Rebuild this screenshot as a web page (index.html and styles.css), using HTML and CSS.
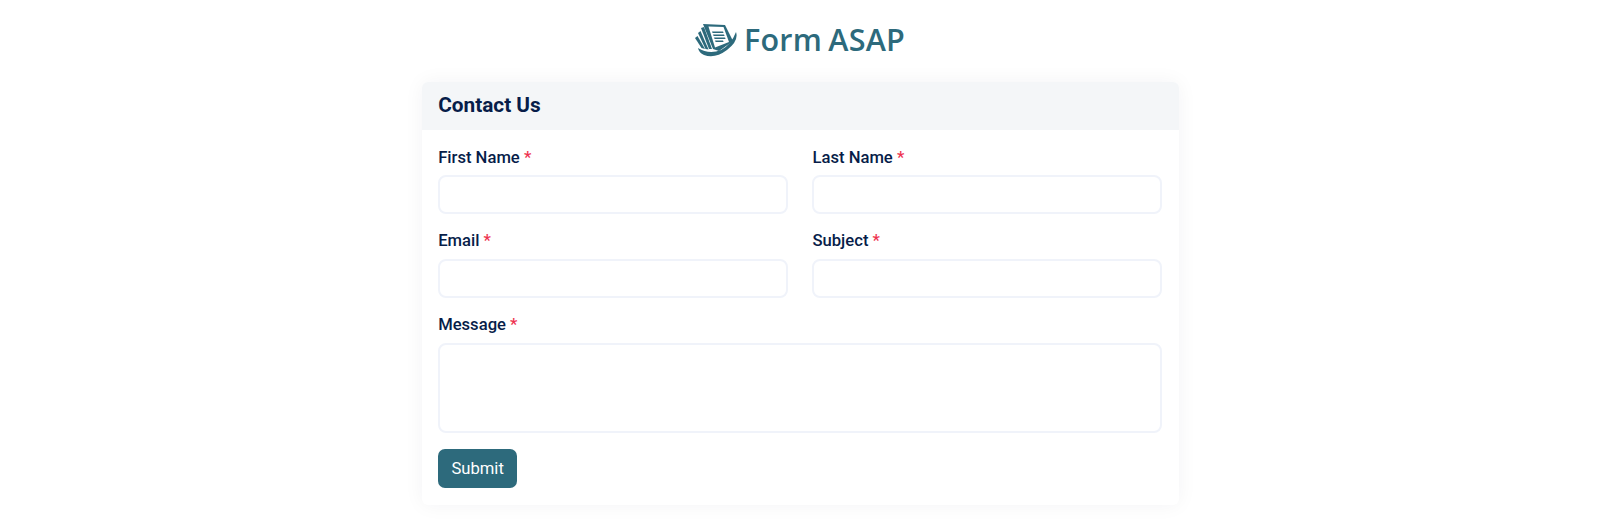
FILE: index.html
```html
<!DOCTYPE html>
<html lang="en">
<head>
<meta charset="utf-8">
<title>Contact Us</title>
<link rel="stylesheet" href="styles.css">
</head>
<body>
<header class="brand">
  <svg class="brand-icon" width="42" height="33" viewBox="0 0 42 33" aria-hidden="true">
    <path class="ink" d="M8 0 L30 1 L38 17 L24 27 L18 25 Z"/>
    <path class="paper" d="M13.500 2.500 L28.500 3 L34 18 L20 23.500 Z"/>
    <path class="ink" d="M17 7.500h11l.6 1.500h-11zM18 10.500h11l.6 1.500h-11zM19 13.500h11l.6 1.500h-11zM20 16.500h8l.6 1.500h-8z"/>
    <path class="ink" d="M6 4 L9 3 L17 25 L14 25 Z"/>
    <path class="ink" d="M3 9 L5.500 7 L13.500 25.500 L10.500 25 Z"/>
    <path class="ink" d="M0 14 L2.500 12 L10 25 L6.500 24 Z"/>
    <path class="ink" d="M3 24 Q14 31 26 26 Q36 21 41 8 Q44 17 32 26 Q20 35 9 31 Q4 29 3 24 Z"/>
  </svg>
  <span class="brand-name">Form ASAP</span>
</header>
<main class="card">
  <h1 class="card-title">Contact Us</h1>
  <form class="card-body">
    <div class="grid">
      <div class="field">
        <label class="label" for="first">First Name <span class="req">*</span></label>
        <input class="control" id="first" type="text">
      </div>
      <div class="field">
        <label class="label" for="last">Last Name <span class="req">*</span></label>
        <input class="control" id="last" type="text">
      </div>
      <div class="field">
        <label class="label" for="email">Email <span class="req">*</span></label>
        <input class="control" id="email" type="email">
      </div>
      <div class="field">
        <label class="label" for="subject">Subject <span class="req">*</span></label>
        <input class="control" id="subject" type="text">
      </div>
      <div class="field wide">
        <label class="label" for="message">Message <span class="req">*</span></label>
        <textarea class="control area" id="message"></textarea>
      </div>
    </div>
    <button class="submit" type="button">Submit</button>
  </form>
</main>
</body>
</html>
```
FILE: styles.css
```css
* { box-sizing: border-box; }
html, body { margin: 0; height: 100%; background: #fff; overflow: hidden; }
body { font-family: Roboto, "Liberation Sans", sans-serif; color: #071d49; }
.brand {
  display: flex; align-items: center; justify-content: center; gap: 7px;
  height: 82px; padding-bottom: 4px;
}
.brand-icon { display: block; margin-top: 3px; }
.ink { fill: #2d6a7c; }
.paper { fill: #fff; }
.brand-name {
  font-family: "Open Sans", sans-serif; font-weight: 600; font-size: 30.5px;
  letter-spacing: 0.25px; word-spacing: -2px; color: #2d6a7c; line-height: 34px;
}
.card {
  width: 757px; height: 423px; margin: 0 auto; background: #fff; border-radius: 6px;
  box-shadow: 0 0 20px rgba(20, 30, 60, 0.05); overflow: hidden;
}
.card-title {
  margin: 0; height: 48px; padding: 0 16.64px; background: #f4f6f8;
  font-size: 20.8px; font-weight: 700; line-height: 46px; color: #071d49;
}
.card-body { padding: 16.64px 16.64px 0; }
.grid { display: grid; grid-template-columns: 1fr 1fr; column-gap: 24.96px; row-gap: 16.64px; }
.wide { grid-column: 1 / -1; }
.field { display: flex; flex-direction: column; min-width: 0; }
.label { font-size: 16.64px; font-weight: 500; line-height: 21.5px; margin-bottom: 6.8px; color: #071d49; }
.req { color: #ee3350; }
.control {
  display: block; width: 100%; height: 38.9px; border: 2px solid #f0f3fa; border-radius: 8px;
  background: #fff; outline: none; padding: 6px 12px;
}
.area { height: 90.2px; resize: none; }
.submit {
  display: block; margin-top: 16px; width: 79px; height: 39px; border: 0; border-radius: 7px;
  background: #2d6a7c; color: #fff; font: 400 16.64px Roboto, sans-serif;
}
```
